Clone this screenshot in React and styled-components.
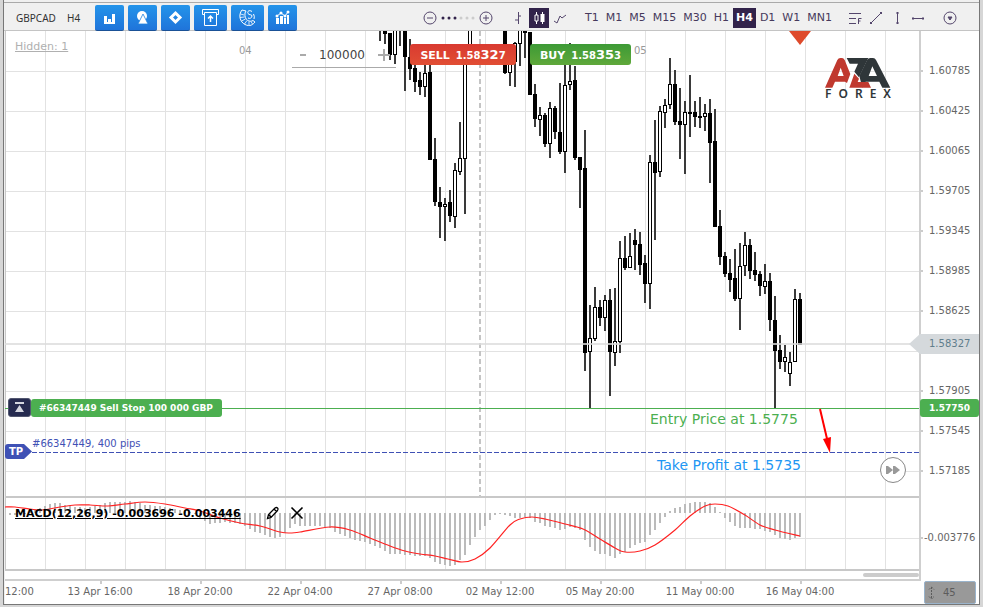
import { useState } from 'react';
import styled, { createGlobalStyle } from 'styled-components';

const GlobalStyle = createGlobalStyle`
  * {
    box-sizing: border-box;
  }

  body {
    margin: 0;
    background-color: #d6d6d6;
    font-family: 'DejaVu Sans', sans-serif;
    font-size: 10px;
    color: #666;
  }

  button,
  input {
    font-family: inherit;
    margin: 0;
    padding: 0;
    border: 0;
    background: none;
    color: inherit;
  }

  button {
    cursor: pointer;
  }

  svg {
    display: block;
  }
`;

// Window
const Page = styled.div`
  display: flex;
  min-height: 100vh;
  padding: 0 3px 2px;
`;

const Window = styled.main`
  display: flex;
  flex-direction: column;
  flex: 1;
  min-width: 0;
  padding-top: 2px;
  border: 1px solid #777;
  border-top: 0;
  background-color: #f0f0f0;
`;

// Toolbar
const Toolbar = styled.header`
  display: flex;
  align-items: flex-end;
  height: 29px;
  padding: 0 11px 0 12px;
  border-top: 1px solid #aaa;
  border-bottom: 1px solid #c4c4c4;
`;

const ToolGroup = styled.div`
  display: flex;
  align-items: center;
  height: 24px;
  gap: ${(props) => props.$gap || 0}px;
  margin-left: ${(props) => props.$offset || 0}px;
`;

const RightGroup = styled(ToolGroup)`
  margin-left: auto;
`;

const Symbol = styled.span`
  width: ${(props) => props.$width}px;
  font-family: 'Noto Sans', sans-serif;
  font-size: 10px;
  line-height: 14px;
  color: #333;
`;

const BlueButton = styled.button`
  display: flex;
  align-items: center;
  justify-content: center;
  width: ${(props) => (props.$wide ? 33 : 29)}px;
  height: 26px;
  border-radius: 2px;
  border-bottom: 1px solid #1a5196;
  background: linear-gradient(#2494ea, #1f74da);
  color: #fff;
`;

const IconButton = styled.button`
  display: flex;
  align-items: center;
  justify-content: center;
  width: ${(props) => props.$width || 14}px;
  height: 20px;
  color: #54466c;
  background-color: ${(props) => (props.$active ? '#32234b' : 'transparent')};
`;

const FrameButton = styled.button`
  height: 20px;
  padding: 0 3px;
  font-size: 11px;
  line-height: 20px;
  font-weight: ${(props) => (props.$active ? 'bold' : 'normal')};
  color: ${(props) => (props.$active ? '#fff' : '#46395c')};
  background-color: ${(props) => (props.$active ? '#32234b' : 'transparent')};
`;

// Chart panes
const Body = styled.section`
  display: grid;
  flex: 1;
  grid-template-columns: minmax(0, 1fr) 60px;
  grid-template-rows: minmax(467px, 1fr) 73px 10px 23px;
  margin-left: 1px;
  background-color: #fff;
`;

const Pane = styled.div`
  position: relative;
  overflow: hidden;
  border-bottom: 2px solid #c8c8c8;
`;

const Canvas = styled.svg`
  width: 100%;
  height: 100%;
`;

const AxisPane = styled.div`
  position: relative;
  border-left: 2px solid #cfcfcf;
`;

const PriceList = styled.ul`
  margin: 0;
  padding: 20px 0 0;
  list-style: none;
`;

const PriceItem = styled.li`
  display: flex;
  align-items: center;
  gap: ${(props) => (props.$tight ? 1 : 6)}px;
  height: 40px;
  line-height: 12px;
  white-space: nowrap;

  &::before {
    content: '';
    width: 2px;
    height: 2px;
    background-color: ${(props) => (props.$empty ? 'transparent' : '#ccc')};
  }
`;

const PriceTag = styled.div`
  position: absolute;
  top: ${(props) => props.$top}px;
  left: ${(props) => (props.$arrow ? -12 : -1)}px;
  right: 0;
  padding-left: ${(props) => (props.$arrow ? 20 : 9)}px;
  height: ${(props) => (props.$arrow ? 20 : 18)}px;
  line-height: ${(props) => (props.$arrow ? 20 : 18)}px;
  border-radius: ${(props) => (props.$arrow ? 0 : 3)}px;
  background-color: ${(props) => (props.$arrow ? '#d5d9dc' : '#4caf50')};
  clip-path: ${(props) => (props.$arrow ? 'polygon(0 50%, 11px 0, 100% 0, 100% 100%, 11px 100%)' : 'none')};
  font-size: ${(props) => (props.$arrow ? 10 : 9)}px;
  font-weight: ${(props) => (props.$arrow ? 'normal' : 'bold')};
  color: ${(props) => (props.$arrow ? '#607d8b' : '#fff')};
`;

const ScrollTrack = styled.div`
  display: flex;
  justify-content: flex-end;
  align-items: center;
  border-bottom: 2px solid #cfcfcf;
`;

const ScrollThumb = styled.div`
  width: 56px;
  height: 4px;
  border-radius: 2px;
  background-color: #ccc;
`;

const TimeAxis = styled.div`
  display: flex;
  overflow: hidden;
`;

const TimeLabel = styled.span`
  position: relative;
  flex: none;
  width: ${(props) => (props.$first ? 45 : 100)}px;
  padding-top: 5px;
  line-height: 12px;
  text-align: ${(props) => (props.$first ? 'left' : 'center')};

  &::before {
    content: '';
    display: ${(props) => (props.$first ? 'none' : 'block')};
    position: absolute;
    top: 0;
    left: 50%;
    width: 2px;
    height: 3px;
    background-color: #ccc;
  }
`;

const ScaleButton = styled.button`
  display: flex;
  align-items: center;
  gap: 8px;
  height: 23px;
  margin: 0 3px 0 5px;
  padding-left: 3px;
  border: 1px solid #9ab4cc;
  border-radius: 2px;
  background-color: #999;
  font-size: 10px;
  color: #5c5c5c;
`;

// Things lying over the chart
const Note = styled.span`
  position: absolute;
  left: ${(props) => props.$x}px;
  top: ${(props) => props.$y}px;
  font-size: ${(props) => props.$size || 10}px;
  line-height: 16px;
  white-space: nowrap;
  color: ${(props) => props.$color || '#999'};
`;

const HiddenLink = styled.a`
  position: absolute;
  left: 10px;
  top: 8px;
  font-size: 11px;
  line-height: 16px;
  color: #b0b0b0;
`;

const TradePanel = styled.form`
  position: absolute;
  left: 287px;
  top: 13px;
  display: flex;
  align-items: flex-start;
`;

const Amount = styled.div`
  display: flex;
  align-items: center;
  justify-content: space-between;
  width: 104px;
  height: 24px;
  margin-right: 14px;
  padding: 0 6px 2px 8px;
  border-bottom: 1px solid #aaa;
`;

const AmountInput = styled.input`
  width: 56px;
  font-size: 12px;
  line-height: 16px;
  text-align: center;
  color: #444;
`;

const StepButton = styled.button`
  color: #aaa;
`;

const TradeButton = styled.button`
  display: flex;
  align-items: baseline;
  justify-content: center;
  gap: 6px;
  width: ${(props) => (props.$buy ? 101 : 106)}px;
  height: 21px;
  margin-right: 14px;
  border-radius: 3px;
  background: ${(props) =>
    props.$buy ? 'linear-gradient(#3d9a36, #5fa83a)' : 'linear-gradient(#d93a30, #e14e34)'};
  font-size: 11px;
  font-weight: bold;
  line-height: 21px;
  color: #fff;
`;

const Quote = styled.span`
  font-size: 10px;

  b {
    font-size: 13px;
  }
`;

const Logo = styled.div`
  position: absolute;
  left: 819px;
  top: 26px;
  width: 68px;
`;

const LogoName = styled.div`
  display: flex;
  justify-content: space-between;
  padding: 0 1px;
  font-family: 'Noto Sans', sans-serif;
  font-size: 12px;
  font-weight: 600;
  line-height: 12px;
  color: #2f3639;
`;

const OrderTag = styled.div`
  position: absolute;
  left: 3px;
  top: 367px;
  display: flex;
  align-items: center;
`;

const OrderIcon = styled.button`
  display: flex;
  align-items: center;
  justify-content: center;
  width: 23px;
  height: 19px;
  border: 1px solid #51566f;
  border-radius: 3px;
  background-color: #262b50;
`;

const OrderText = styled.span`
  height: 18px;
  padding: 0 9px 0 8px;
  border-radius: 3px;
  background-color: #4caf50;
  font-size: 9px;
  font-weight: bold;
  line-height: 18px;
  color: #fff;
`;

const TakeProfitTag = styled.span`
  position: absolute;
  left: 0;
  top: 413px;
  width: 27px;
  height: 15px;
  padding-left: 4px;
  border-radius: 3px;
  background-color: #3f51b5;
  clip-path: polygon(0 0, 19px 0, 100% 50%, 19px 100%, 0 100%);
  font-size: 10px;
  font-weight: bold;
  line-height: 15px;
  color: #fff;
`;

const ForwardButton = styled.button`
  position: absolute;
  left: 875px;
  top: 426px;
  display: flex;
  align-items: center;
  justify-content: center;
  width: 26px;
  height: 26px;
  border: 1px solid #888;
  border-radius: 50%;
  background-color: #fff;
`;

const IndicatorBar = styled.div`
  position: absolute;
  left: 10px;
  top: 7px;
  display: flex;
  align-items: center;
  height: 16px;
`;

const IndicatorName = styled.a`
  margin-right: 25px;
  font-size: 11px;
  font-weight: bold;
  color: #000;
`;

const IndicatorButton = styled.button`
  margin-right: 10px;
  color: #000;
`;

const FRAMES = ['T1', 'M1', 'M5', 'M15', 'M30', 'H1', 'H4', 'D1', 'W1', 'MN1'];

const PRICES = [
  '1.60785', '1.60425', '1.60065', '1.59705', '1.59345', '1.58985',
  '1.58625', '', '1.57905', '1.57545', '1.57185',
];

const TIMES = [
  '13 Apr 16:00', '18 Apr 20:00', '22 Apr 04:00', '27 Apr 08:00',
  '02 May 12:00', '05 May 20:00', '11 May 00:00', '16 May 04:00',
];

// x, high, low, body top, body bottom, rising
const CANDLES = [
  [380, 20, 41, 20, 30], [385, 20, 44, 20, 34], [390, 33, 60, 33, 55], [395, 20, 64, 20, 55, 1],
  [400, 20, 46, 20, 30], [405, 20, 91, 20, 57], [410, 39, 80, 57, 69], [415, 64, 92, 68, 82],
  [420, 72, 95, 80, 87], [425, 60, 97, 73, 87, 1], [430, 65, 160, 72, 160], [435, 138, 206, 159, 202],
  [440, 187, 238, 202, 207], [445, 198, 241, 204, 207, 1], [450, 190, 222, 202, 216], [455, 163, 228, 170, 217, 1],
  [460, 122, 175, 158, 172, 1], [465, 50, 214, 50, 159, 1], [470, 20, 50, 20, 50, 1], [505, 20, 74, 20, 73],
  [510, 50, 86, 60, 73, 1], [515, 42, 87, 43, 62, 1], [520, 20, 66, 20, 44, 1], [525, 20, 58, 20, 33],
  [530, 32, 95, 32, 95], [535, 84, 127, 94, 119], [540, 107, 136, 115, 120, 1], [545, 113, 147, 115, 144],
  [550, 102, 158, 108, 144, 1], [555, 106, 139, 108, 132], [560, 83, 154, 132, 152], [565, 60, 173, 85, 152, 1],
  [570, 43, 90, 81, 85, 1], [575, 66, 160, 80, 158], [580, 157, 208, 157, 170], [585, 130, 371, 168, 353],
  [590, 305, 408, 338, 352, 1], [595, 287, 341, 307, 339, 1], [600, 300, 326, 307, 318], [605, 295, 331, 300, 318, 1],
  [610, 289, 396, 300, 352], [615, 288, 366, 341, 353, 1], [620, 241, 353, 258, 342, 1], [625, 236, 270, 258, 268],
  [630, 233, 268, 256, 268, 1], [635, 229, 270, 240, 245], [640, 232, 275, 244, 265], [645, 255, 303, 263, 284],
  [650, 155, 309, 162, 284, 1], [655, 120, 240, 162, 173], [660, 106, 177, 111, 172, 1], [665, 99, 128, 105, 113, 1],
  [670, 58, 109, 84, 105, 1], [675, 70, 125, 84, 122], [680, 88, 159, 121, 125], [685, 101, 174, 112, 125, 1],
  [690, 75, 137, 112, 114], [695, 101, 127, 112, 117], [700, 97, 128, 116, 118], [705, 104, 131, 113, 117, 1],
  [710, 99, 183, 113, 143], [715, 109, 227, 141, 227], [720, 210, 265, 226, 257], [725, 252, 277, 256, 274],
  [730, 259, 292, 273, 280], [735, 249, 301, 278, 299], [740, 243, 330, 266, 299, 1], [745, 232, 276, 245, 266, 1],
  [750, 239, 279, 245, 271], [755, 252, 281, 270, 275], [760, 271, 296, 274, 286], [765, 264, 294, 281, 287, 1],
  [770, 273, 331, 281, 320], [775, 296, 408, 320, 351], [780, 335, 369, 350, 362], [785, 345, 372, 357, 362, 1],
  [790, 352, 386, 362, 374, 1], [795, 289, 362, 299, 362, 1], [800, 293, 345, 299, 345],
];

// One histogram value for every 5px, starting at x = 10
const HISTOGRAM = [
  515, 515, 514, 514, 511, 509, 508, 506, 504, 503, 503, 505, 506, 507, 507, 508, 507, 506, 505, 503,
  502, 502, 502, 502, 501, 502, 503, 505, 505, 506, 506, 507, 508, 509, 510, 511, 512, 514, 518, 521,
  524, 523, 523, 522, 523, 523, 524, 526, 529, 532, 533, 535, 537, 538, 537, 533, 528, 524, 526, 526,
  526, 526, 526, 527, 528, 532, 534, 536, 538, 540, 541, 542, 544, 546, 548, 551, 554, 554, 554, 555,
  555, 556, 556, 556, 558, 562, 564, 565, 566, 565, 560, 555, 545, 537, 530, 526, 520, 515, 514, 515,
  516, 518, 518, 517, 518, 522, 523, 526, 527, 528, 530, 529, 527, 528, 530, 540, 547, 551, 554, 554,
  556, 558, 554, 552, 548, 545, 543, 542, 535, 530, 523, 517, 511, 508, 507, 504, 503, 502, 502, 502,
  503, 507, 512, 518, 522, 526, 528, 528, 528, 529, 529, 531, 532, 535, 538, 539, 540, 538, 537,
];

const SIGNAL = [
  [5, 507], [15, 507], [30, 509], [42, 510], [60, 507], [75, 505], [90, 505], [108, 506], [125, 504],
  [145, 502], [165, 504], [185, 508], [200, 511], [220, 518], [240, 523], [260, 526], [280, 532],
  [290, 533], [300, 532], [330, 527], [350, 530], [370, 538], [390, 546], [405, 551], [420, 554],
  [435, 556], [448, 559], [462, 562], [475, 559], [490, 548], [510, 525], [520, 519], [532, 517],
  [545, 519], [565, 524], [583, 529], [600, 539], [615, 548], [625, 552], [640, 551], [655, 545],
  [675, 530], [690, 516], [705, 506], [715, 504], [728, 506], [745, 515], [760, 525], [775, 530], [800, 536],
];

const GRID_X = Array.from({ length: 22 }, (_, i) => 45 + i * 40);
const GRID_Y = Array.from({ length: 11 }, (_, i) => 71 + i * 40);

// Catmull-Rom spline through the points
const smoothPath = (points) =>
  points.slice(0, -1).reduce((path, p1, i) => {
    const p0 = points[i - 1] || p1;
    const p2 = points[i + 1];
    const p3 = points[i + 2] || p2;
    const c1 = [p1[0] + (p2[0] - p0[0]) / 6, p1[1] + (p2[1] - p0[1]) / 6];
    const c2 = [p2[0] - (p3[0] - p1[0]) / 6, p2[1] - (p3[1] - p1[1]) / 6];
    return `${path} C${c1} ${c2} ${p2}`;
  }, `M${points[0]}`);

const Candle = ({ data: [x, high, low, top, bottom, rising] }) => (
  <g>
    <rect x={x - 1} y={high} width="2" height={low - high} fill="#3a3a3a" />
    {rising ? (
      <rect x={x - 1.5} y={top + 0.5} width="3" height={bottom - top - 1} fill="#fff" stroke="#000" />
    ) : (
      <rect x={x - 2} y={top} width="4" height={bottom - top} fill="#000" />
    )}
  </g>
);

const PriceChart = () => (
  <Canvas aria-hidden="true">
    <g transform="translate(-5 -31)">
      <g fill="#e2e2e2">
        {GRID_X.map((x) => <rect key={x} x={x} y="31" width="1" height="2000" />)}
        {GRID_Y.map((y) => <rect key={y} x="5" y={y} width="4000" height="1" />)}
      </g>
      <rect x="5" y="31" width="1" height="2000" fill="#c8c8c8" />
      <path d="M480 31V2000" stroke="#c4c4c4" strokeWidth="2" strokeDasharray="5 3" />
      {CANDLES.map((candle) => <Candle key={candle[0]} data={candle} />)}
      <path d="M5 344H4000" stroke="#dcdcdc" strokeWidth="2" strokeOpacity="0.8" />
      <path d="M5 408.5H4000" stroke="#4caf50" />
      <path d="M32 452.5H4000" stroke="#3f51b5" strokeDasharray="5 2" />
      <path d="M789 31H811L800 45Z" fill="#de4a2b" />
      <path d="M820 409L828 443" stroke="#f00" strokeWidth="2" />
      <path d="M823 439L831 437L830 453Z" fill="#f00" />
    </g>
  </Canvas>
);

const MacdChart = () => (
  <Canvas aria-hidden="true">
    <g transform="translate(-5 -498)">
      <g fill="#e2e2e2">
        {GRID_X.map((x) => <rect key={x} x={x} y="498" width="1" height="73" />)}
        <rect x="5" y="538" width="4000" height="1" />
      </g>
      <rect x="5" y="498" width="1" height="73" fill="#c8c8c8" />
      <g fill="#bbb">
        {HISTOGRAM.map((y, i) => (
          <rect key={i} x={9 + i * 5} y={Math.min(y, 513)} width="2" height={Math.abs(y - 513)} />
        ))}
      </g>
      <path d={smoothPath(SIGNAL)} fill="none" stroke="#f22" strokeWidth="1.2" />
    </g>
  </Canvas>
);

const BlueIcons = [
  {
    name: 'Charts',
    art: <path d="M3 7h3v8H3zM7 10h3v5H7zM11 5h3v10h-3zM3 13h11v2H3z" fill="currentColor" />,
  },
  {
    name: 'Shapes',
    art: (
      <>
        <circle cx="8" cy="7" r="5" fill="currentColor" />
        <path d="M9 5l5 10H4z" fill="currentColor" stroke="#2184e0" strokeWidth="0.8" />
      </>
    ),
  },
  {
    name: 'Objects',
    art: <path d="M8.500 4l4.500 4.500-4.500 4.500L4 8.500z" fill="none" stroke="currentColor" strokeWidth="3" />,
  },
  {
    name: 'Export',
    wide: true,
    art: (
      <g fill="none" stroke="currentColor">
        <path d="M2.500 5.500h-2v-5h16v5h-2M2.500 3.500h12v13h-12z" />
        <path d="M8.500 13V7M6 9.500L8.500 7l2.500 2.500" strokeWidth="1.500" />
      </g>
    ),
  },
  {
    name: 'Call',
    wide: true,
    art: (
      <g fill="none" stroke="currentColor">
        <path d="M3 1C-1 6 1 13 6 15.500s8 0 10-2.500l-2-1.500c-3 2-9 0-8-7.500L7 2z" />
        <path d="M1.500 5l3.500 1M1 8.500l4.500-0.500M2.500 12l4-2M5.500 15l2.500-3.500M10 16v-3.500M13.500 15l-1.500-2.500" strokeWidth="0.800" />
        <path d="M13 2.500c-3-2-5 0-4 2s4 0.500 4 2.500-2.500 3-4 2M14.500 5a6 6 0 0 1 0.500 5" />
      </g>
    ),
  },
  {
    name: 'Indicators',
    art: (
      <g>
        <path d="M2 9h3v6H2zM6 7h3v8H6zM10 9h2v6h-2zM13 6h2v9h-2z" fill="currentColor" />
        <path d="M3 7l4-3 4 3 3-4" fill="none" stroke="currentColor" />
        <g fill="currentColor">
          <circle cx="3" cy="7" r="1.5" />
          <circle cx="7" cy="4" r="1.5" />
          <circle cx="11" cy="7" r="1.5" />
          <circle cx="14" cy="3" r="1.5" />
        </g>
      </g>
    ),
  },
];

const Icon = ({ children, width = 14, height = 14 }) => (
  <svg width={width} height={height} viewBox={`0 0 ${width} ${height}`} fill="none" stroke="currentColor" aria-hidden="true">
    {children}
  </svg>
);

const TopToolbar = ({ frame, setFrame }) => (
  <Toolbar>
    <ToolGroup>
      <Symbol $width={51}>GBPCAD</Symbol>
      <Symbol $width={28}>H4</Symbol>
    </ToolGroup>
    <ToolGroup $gap={4}>
      {BlueIcons.map(({ name, wide, art }) => (
        <BlueButton key={name} $wide={wide} aria-label={name}>
          <svg width="17" height="17" viewBox="0 0 17 17">{art}</svg>
        </BlueButton>
      ))}
    </ToolGroup>
    <ToolGroup $gap={4} $offset={126}>
      <IconButton aria-label="Zoom out">
        <Icon><circle cx="7" cy="7" r="6" /><path d="M4 7h6" /></Icon>
      </IconButton>
      <svg width="34" height="4" viewBox="0 0 34 4" aria-hidden="true">
        {[2, 8, 14, 20, 26, 32].map((x, i) => (
          <circle key={x} cx={x} cy="2" r="1.5" fill={i < 3 ? '#32234b' : '#ccc'} />
        ))}
      </svg>
      <IconButton aria-label="Zoom in">
        <Icon><circle cx="7" cy="7" r="6" /><path d="M4 7h6M7 4v6" /></Icon>
      </IconButton>
    </ToolGroup>
    <ToolGroup $gap={4} $offset={18}>
      <IconButton aria-label="Bars">
        <Icon><path d="M7.500 1v12M4 9h3M8 5h2" /></Icon>
      </IconButton>
      <IconButton $width={20} $active aria-label="Candles">
        <Icon>
          <path d="M4.500 1v12M10.500 1v12" stroke="#fff" />
          <path d="M3 4h3v6H3z" fill="#32234b" stroke="#fff" />
          <path d="M8.500 3h4v8h-4z" fill="#fff" stroke="none" />
        </Icon>
      </IconButton>
      <IconButton aria-label="Line">
        <Icon><path d="M1 10l3 2 3-7 2 2 4-3" /></Icon>
      </IconButton>
    </ToolGroup>
    <ToolGroup $gap={1} $offset={15}>
      {FRAMES.map((name) => (
        <FrameButton key={name} $active={name === frame} onClick={() => setFrame(name)}>
          {name}
        </FrameButton>
      ))}
    </ToolGroup>
    <RightGroup $gap={7}>
      <IconButton aria-label="Fibonacci">
        <Icon><path d="M1 2.500h12M1 7.500h7M1 12.500h7M10.500 13V7.500h3M10.500 10h2" /></Icon>
      </IconButton>
      <IconButton aria-label="Trend line">
        <Icon><path d="M2 12L12 2" /><path d="M1 12h2M11 2h2" strokeWidth="2" /></Icon>
      </IconButton>
      <IconButton aria-label="Vertical line">
        <Icon><path d="M7.500 2v11" /><path d="M7.500 1v2M7.500 11v2" strokeWidth="2" /></Icon>
      </IconButton>
      <IconButton aria-label="Horizontal line">
        <Icon><path d="M1 7.500h12" /><path d="M1 7.500h2M11 7.500h2" strokeWidth="2" /></Icon>
      </IconButton>
      <IconButton $width={36} aria-label="More">
        <Icon><circle cx="7" cy="7" r="6" /><path d="M5 6h4l-2 3z" fill="currentColor" /></Icon>
      </IconButton>
    </RightGroup>
  </Toolbar>
);

const Brand = () => (
  <Logo>
    <svg width="68" height="31" viewBox="733 171 204 93" aria-label="AZA Forex">
      <path
        d="M736 263L773 180Q776 174 782 174H787Q792 174 795 180L812 222L802 249L796 245H766L758 263ZM774 228H792L783 203Z"
        fill="#c0392f"
        fillRule="evenodd"
      />
      <path
        d="M839 228L862 181Q866 174 872 174H880Q886 174 889 180L932 263H908L899 245H858L848 263ZM867 228H892L878 199Z"
        fill="#2f3639"
        fillRule="evenodd"
      />
      <path d="M801 174H866L838 232L824 215L835 191H810Z" fill="#2f3639" />
      <path d="M824 221L838 236L834 246H866L874 263H809Z" fill="#c0392f" />
    </svg>
    <LogoName>
      {'FOREX'.split('').map((letter) => <span key={letter}>{letter}</span>)}
    </LogoName>
  </Logo>
);

const Trade = () => {
  const [amount, setAmount] = useState(100000);

  return (
    <TradePanel onSubmit={(e) => e.preventDefault()}>
      <Amount>
        <StepButton type="button" aria-label="Less" onClick={() => setAmount(amount - 1000)}>
          <Icon width={6} height={12}><path d="M0 6h6" strokeWidth="2" /></Icon>
        </StepButton>
        <AmountInput aria-label="Amount" value={amount} onChange={(e) => setAmount(Number(e.target.value))} />
        <StepButton type="button" aria-label="More" onClick={() => setAmount(amount + 1000)}>
          <Icon width={12} height={12}><path d="M0 6h12M6 0v12" strokeWidth="2" /></Icon>
        </StepButton>
      </Amount>
      <TradeButton type="button">
        SELL <Quote>1.58<b>32</b>7</Quote>
      </TradeButton>
      <TradeButton type="button" $buy>
        BUY <Quote>1.58<b>35</b>3</Quote>
      </TradeButton>
    </TradePanel>
  );
};

const App = () => {
  const [frame, setFrame] = useState('H4');

  return (
    <Page>
      <GlobalStyle />
      <Window>
        <TopToolbar frame={frame} setFrame={setFrame} />
        <Body>
          {/* Price chart */}
          <Pane>
            <PriceChart />
            <HiddenLink href="#hidden">Hidden: 1</HiddenLink>
            <Note $x={234} $y={12}>04</Note>
            <Note $x={629} $y={12}>05</Note>
            <Trade />
            <Brand />
            <OrderTag>
              <OrderIcon aria-label="Move order">
                <svg width="11" height="13" viewBox="0 0 11 13" fill="#d5d7e0">
                  <path d="M1 1h9v2H1zM5.500 4l4.500 7H1z" />
                </svg>
              </OrderIcon>
              <OrderText>#66347449 Sell Stop 100 000 GBP</OrderText>
            </OrderTag>
            <Note $x={27} $y={405} $color="#3f51b5">#66347449, 400 pips</Note>
            <TakeProfitTag>TP</TakeProfitTag>
            <Note $x={645} $y={380} $size={14} $color="#4caf50">Entry Price at 1.5775</Note>
            <Note $x={652} $y={426} $size={14} $color="#2196f3">Take Profit at 1.5735</Note>
            <ForwardButton aria-label="Scroll to end">
              <svg width="14" height="8" viewBox="0 0 14 8" fill="#999">
                <path d="M0 0h2l5 4-5 4H0zM7 0h2l5 4-5 4H7z" />
              </svg>
            </ForwardButton>
          </Pane>
          <AxisPane>
            <PriceList>
              {PRICES.map((price, i) => (
                <PriceItem key={i} $empty={!price}>{price}</PriceItem>
              ))}
            </PriceList>
            <PriceTag $top={303} $arrow>1.58327</PriceTag>
            <PriceTag $top={368}>1.57750</PriceTag>
          </AxisPane>

          {/* Indicator */}
          <Pane>
            <MacdChart />
            <IndicatorBar>
              <IndicatorName href="#macd">MACD(12,26,9) -0.003696 -0.003446</IndicatorName>
              <IndicatorButton aria-label="Edit">
                <Icon>
                  <path d="M1.500 12.500l1-4 6.500-6.500q1.500-1 2.500 0t0 2.500L5 11.500zM2.500 8.500l3 3M8 3l3 3" strokeWidth="1.300" />
                </Icon>
              </IndicatorButton>
              <IndicatorButton aria-label="Remove">
                <Icon><path d="M1.500 1.500l11 11M12.500 1.500l-11 11" strokeWidth="1.600" /></Icon>
              </IndicatorButton>
            </IndicatorBar>
          </Pane>
          <AxisPane>
            <PriceList>
              <PriceItem $tight>-0.003776</PriceItem>
            </PriceList>
          </AxisPane>

          <ScrollTrack>
            <ScrollThumb />
          </ScrollTrack>
          <AxisPane />

          <TimeAxis>
            <TimeLabel $first>12:00</TimeLabel>
            {TIMES.map((time) => <TimeLabel key={time}>{time}</TimeLabel>)}
          </TimeAxis>
          <ScaleButton>
            <Icon width={7} height={14}>
              <path d="M3.500 1v12M1 3.500L3.500 1 6 3.500M1 10.500L3.500 13 6 10.500" strokeDasharray="2 1" />
            </Icon>
            45
          </ScaleButton>
        </Body>
      </Window>
    </Page>
  );
};

export default App;
